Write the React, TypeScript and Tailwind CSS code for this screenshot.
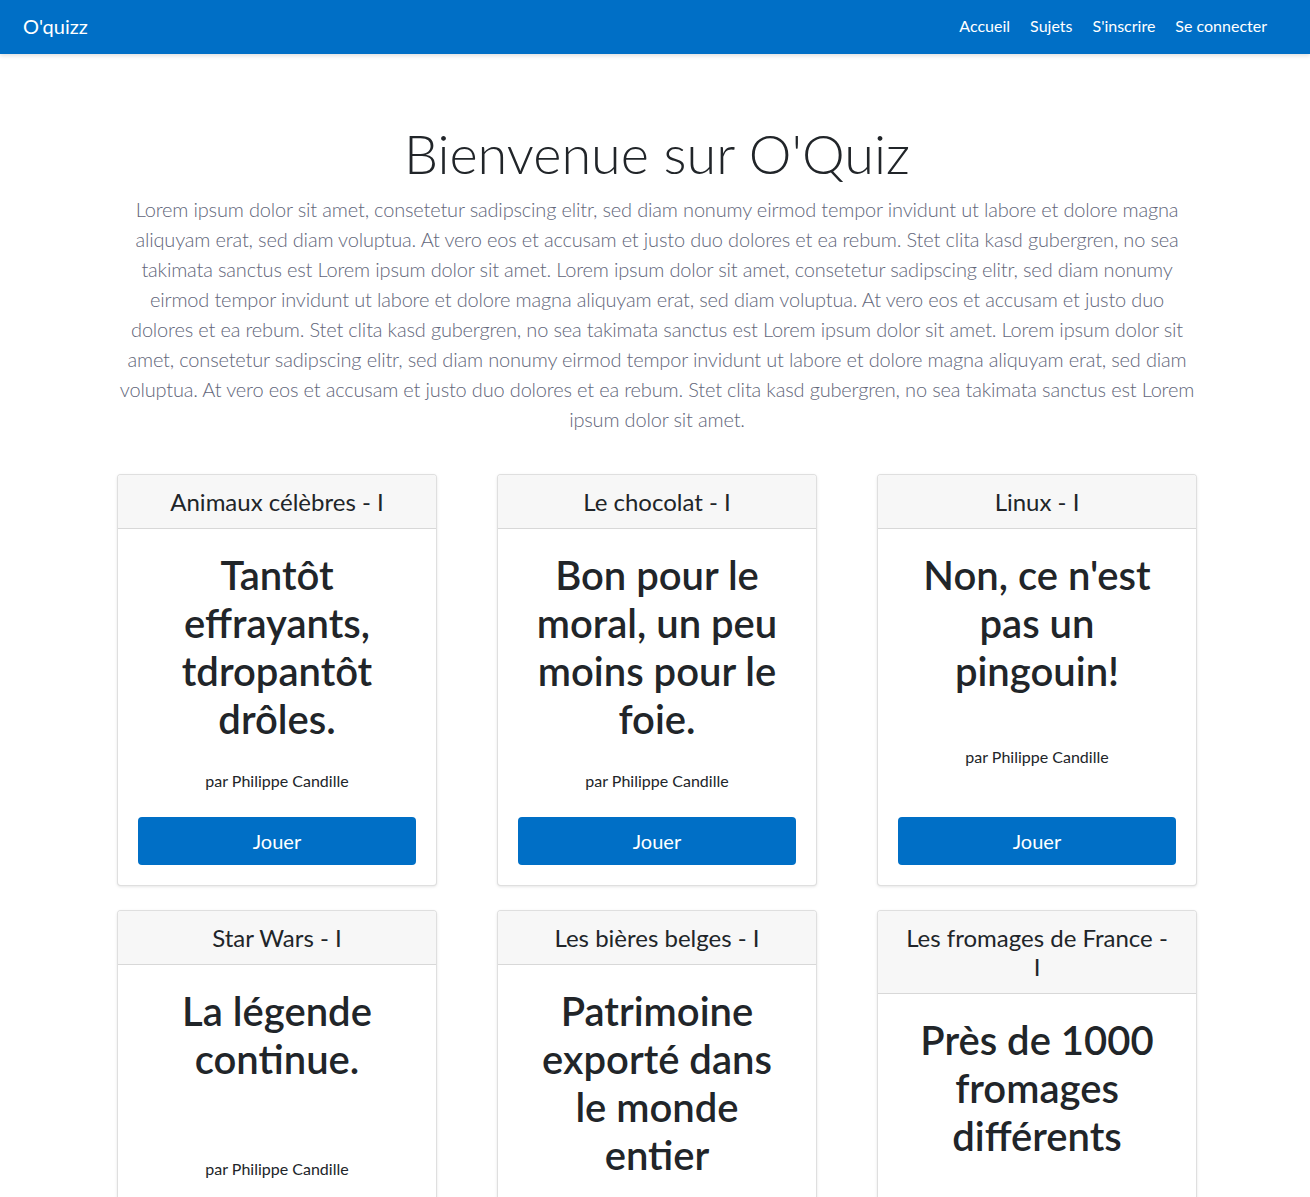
import React from "react";

const quizzes = [
  { topic: "Animaux célèbres - I", title: "Tantôt effrayants, tdropantôt drôles." },
  { topic: "Le chocolat - I", title: "Bon pour le moral, un peu moins pour le foie." },
  { topic: "Linux - I", title: "Non, ce n'est pas un pingouin!" },
  { topic: "Star Wars - I", title: "La légende continue." },
  { topic: "Les bières belges - I", title: "Patrimoine exporté dans le monde entier" },
  { topic: "Les fromages de France - I", title: "Près de 1000 fromages différents" },
];

const lorem =
  "Lorem ipsum dolor sit amet, consetetur sadipscing elitr, sed diam nonumy eirmod tempor invidunt ut labore et dolore magna aliquyam erat, sed diam voluptua. At vero eos et accusam et justo duo dolores et ea rebum. Stet clita kasd gubergren, no sea takimata sanctus est Lorem ipsum dolor sit amet. Lorem ipsum dolor sit amet, consetetur sadipscing elitr, sed diam nonumy eirmod tempor invidunt ut labore et dolore magna aliquyam erat, sed diam voluptua. At vero eos et accusam et justo duo dolores et ea rebum. Stet clita kasd gubergren, no sea takimata sanctus est Lorem ipsum dolor sit amet. Lorem ipsum dolor sit amet, consetetur sadipscing elitr, sed diam nonumy eirmod tempor invidunt ut labore et dolore magna aliquyam erat, sed diam voluptua. At vero eos et accusam et justo duo dolores et ea rebum. Stet clita kasd gubergren, no sea takimata sanctus est Lorem ipsum dolor sit amet.";

export default function App() {
  return (
    <div className="min-h-screen bg-white text-[#212529] font-['Lato','Liberation_Sans',sans-serif]">
      <nav className="h-[54px] bg-[#006fc6] flex items-center justify-between pl-[23px] pr-[43px] pb-[2px] shadow-[0_2px_4px_rgba(0,0,0,0.12)] relative z-10">
        <a className="text-white text-[20px] leading-[30px]">O'quizz</a>
        <ul className="flex items-center gap-[20px] text-white text-[16px] leading-[24px]">
          <li>Accueil</li>
          <li>Sujets</li>
          <li>S'inscrire</li>
          <li>Se connecter</li>
        </ul>
      </nav>

      <main className="flex flex-col items-center pl-[4px] pb-10">
        <h1 className="mt-[66px] text-[54px] font-light leading-[67px] text-center text-[#212529]">
          Bienvenue sur O'Quiz
        </h1>
        <p className="mt-[7px] w-[1080px] text-center text-[20px] font-light leading-[30px] tracking-[-0.17px] text-[#62667a]">
          {lorem}
        </p>

        <div className="mt-[40px] w-[1080px] grid grid-cols-3 gap-x-[60px] gap-y-[24px]">
          {quizzes.map((q) => (
            <div
              key={q.topic}
              className="flex flex-col border border-[rgba(0,0,0,0.125)] rounded-[4px] bg-white shadow-[0_1px_3px_rgba(0,0,0,0.1)] overflow-hidden"
            >
              <div className="bg-[#f7f7f7] border-b border-[rgba(0,0,0,0.125)] px-6 py-3 text-center text-[24px] leading-[29px]">
                {q.topic}
              </div>
              <div className="flex-1 flex flex-col justify-between px-5 pt-[22px] pb-[20px] text-center">
                <h2 className="px-1 mb-[26px] text-[40px] font-semibold leading-[48px]">{q.title}</h2>
                <p className="mb-[24px] text-[16px] leading-[24px]">par Philippe Candille</p>
                <button className="h-[48px] w-full bg-[#006fc6] text-white text-[20px] rounded-[4px]">
                  Jouer
                </button>
              </div>
            </div>
          ))}
        </div>
      </main>
    </div>
  );
}
